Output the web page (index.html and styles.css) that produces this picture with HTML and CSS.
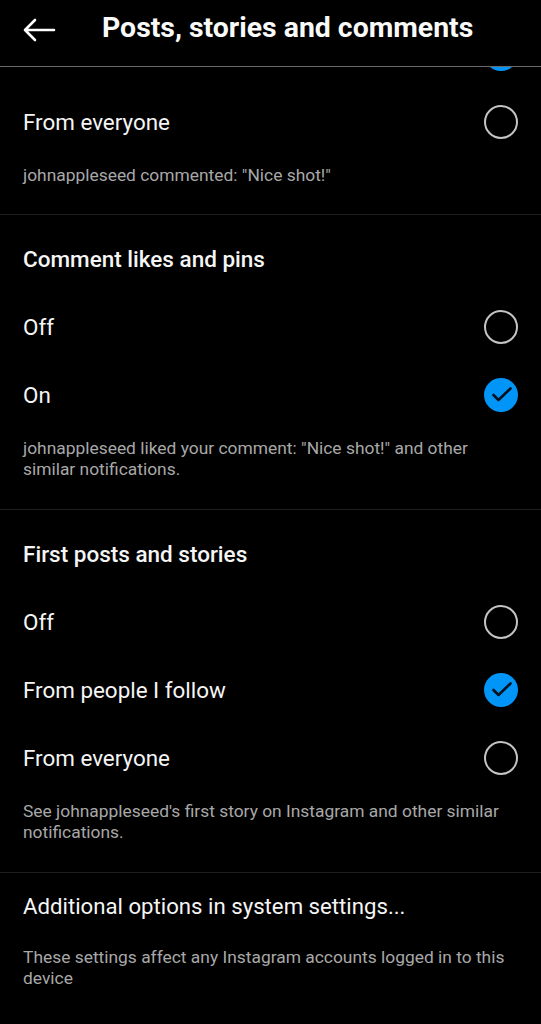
FILE: index.html
```html
<!DOCTYPE html>
<html lang="en">
<head>
<meta charset="utf-8">
<title>Posts, stories and comments</title>
<link rel="stylesheet" href="styles.css">
</head>
<body>
<div class="screen">
  <header class="topbar">
    <svg class="back" width="34" height="24" viewBox="0 0 34 24" aria-hidden="true">
      <path d="M32 12H3M13 2L3 12l10 10" fill="none" stroke="#fff" stroke-width="2.6" stroke-linecap="round" stroke-linejoin="round"/>
    </svg>
    <h1 class="title">Posts, stories and comments</h1>
  </header>
  <main class="scroll">
    <div class="content">
      <section class="section first">
        <div class="row"><span class="label">From people I follow</span><span class="check"><svg width="34" height="34" viewBox="0 0 34 34"><circle cx="17" cy="17" r="17" fill="#0095f6"/><path d="M9.5 17l5 5 12-11.5" fill="none" stroke="#06121f" stroke-width="2.6" stroke-linecap="round" stroke-linejoin="round"/></svg></span></div>
        <div class="row"><span class="label">From everyone</span><span class="radio"></span></div>
        <p class="desc">johnappleseed commented: "Nice shot!"</p>
      </section>
      <section class="section">
        <div class="row heading"><span class="label">Comment likes and pins</span></div>
        <div class="row"><span class="label">Off</span><span class="radio"></span></div>
        <div class="row"><span class="label">On</span><span class="check"><svg width="34" height="34" viewBox="0 0 34 34"><circle cx="17" cy="17" r="17" fill="#0095f6"/><path d="M9.5 17l5 5 12-11.5" fill="none" stroke="#06121f" stroke-width="2.6" stroke-linecap="round" stroke-linejoin="round"/></svg></span></div>
        <p class="desc">johnappleseed liked your comment: "Nice shot!" and other similar notifications.</p>
      </section>
      <section class="section">
        <div class="row heading"><span class="label">First posts and stories</span></div>
        <div class="row"><span class="label">Off</span><span class="radio"></span></div>
        <div class="row"><span class="label">From people I follow</span><span class="check"><svg width="34" height="34" viewBox="0 0 34 34"><circle cx="17" cy="17" r="17" fill="#0095f6"/><path d="M9.5 17l5 5 12-11.5" fill="none" stroke="#06121f" stroke-width="2.6" stroke-linecap="round" stroke-linejoin="round"/></svg></span></div>
        <div class="row"><span class="label">From everyone</span><span class="radio"></span></div>
        <p class="desc">See johnappleseed's first story on Instagram and other similar notifications.</p>
      </section>
      <section class="section last">
        <div class="row link"><span class="label">Additional options in system settings...</span></div>
        <p class="desc">These settings affect any Instagram accounts logged in to this device</p>
      </section>
    </div>
  </main>
</div>
</body>
</html>
```

FILE: styles.css
```css
* { box-sizing: border-box; }
html, body {
  margin: 0;
  padding: 0;
  background: #000;
}
body {
  font-family: Roboto, "Noto Sans", "Liberation Sans", sans-serif;
  color: #f5f5f5;
}
.screen {
  width: 541px;
  height: 1024px;
  display: flex;
  flex-direction: column;
  overflow: hidden;
}
.topbar {
  height: 67px;
  flex: 0 0 67px;
  display: flex;
  align-items: center;
  padding: 0 0 12px 22px;
  border-bottom: 1px solid #6a6a6a;
}
.back {
  flex: 0 0 auto;
  display: block;
  margin-top: 6px;
}
.title {
  margin: 0 0 0 46px;
  font-size: 28.4px;
  font-weight: 700;
  color: #fafafa;
  letter-spacing: 0;
  white-space: nowrap;
}
.scroll {
  flex: 1 1 auto;
  overflow: hidden;
}
.content {
  margin-top: -47px;
}
.section {
  padding: 10px 0 29px;
  border-bottom: 1px solid #1f1f1f;
}
.section.first {
  padding-top: 0;
  padding-bottom: 28px;
}
.section.last {
  border-bottom: none;
}
.row {
  height: 68px;
  display: flex;
  align-items: center;
  justify-content: space-between;
  padding: 0 23px;
}
.label {
  font-size: 22.4px;
  font-weight: 400;
  color: #f5f5f5;
}
.heading .label {
  font-weight: 500;
  font-size: 22.5px;
}
.row.link {
  height: 46px;
}
.row.link .label {
  font-size: 22.2px;
}
.radio {
  width: 34px;
  height: 34px;
  border: 2.5px solid #c4c4c4;
  border-radius: 50%;
  flex: 0 0 auto;
}
.check {
  width: 34px;
  height: 34px;
  flex: 0 0 auto;
}
.check svg {
  display: block;
}
.desc {
  margin: 9px 0 0;
  padding: 0 20px 0 23px;
  font-size: 17.4px;
  line-height: 21px;
  color: #a8a8a8;
}
.last .desc {
  margin-top: 18px;
}
```
